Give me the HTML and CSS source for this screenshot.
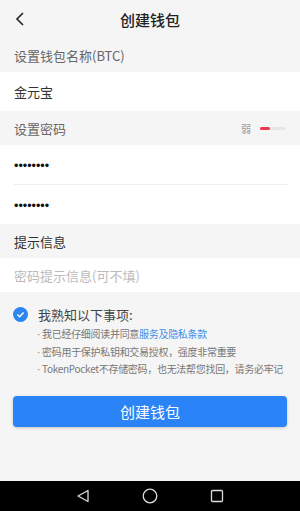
FILE: index.html
```html
<!DOCTYPE html>
<html lang="zh">
<head>
<meta charset="utf-8">
<link rel="stylesheet" href="styles.css">
</head>
<body>
<div class="screen">
  <header class="topbar">
    <svg class="back" width="10" height="14" viewBox="0 0 10 14"><path d="M8 1 L2 7 L8 13" fill="none" stroke="#222" stroke-width="1.6"/></svg>
    <h1 class="title">创建钱包</h1>
  </header>

  <div class="label">设置钱包名称(BTC)</div>
  <div class="group">
    <div class="row">金元宝</div>
  </div>

  <div class="label label-split">
    <span>设置密码</span>
    <span class="strength"><span class="weak">弱</span><span class="bar"><span class="fill"></span></span></span>
  </div>
  <div class="group">
    <div class="row dots divided">••••••••</div>
    <div class="row dots">••••••••</div>
  </div>

  <div class="label label-dark">提示信息</div>
  <div class="group">
    <div class="row placeholder">密码提示信息(可不填)</div>
  </div>

  <section class="notice">
    <div class="notice-head">
      <svg class="check" width="15" height="15" viewBox="0 0 15 15"><circle cx="7.5" cy="7.5" r="7.5" fill="#2b86f0"/><path d="M4.4 7.6 L6.6 9.7 L10.6 5.4" fill="none" stroke="#fff" stroke-width="1.4"/></svg>
      <span>我熟知以下事项:</span>
    </div>
    <ul class="points">
      <li><span class="mid">·</span>我已经仔细阅读并同意<span class="link">服务及隐私条款</span></li>
      <li><span class="mid">·</span>密码用于保护私钥和交易授权，强度非常重要</li>
      <li><span class="mid">·</span>TokenPocket不存储密码，也无法帮您找回，请务必牢记</li>
    </ul>
  </section>

  <div class="actions">
    <button class="primary">创建钱包</button>
  </div>

  <nav class="navbar">
    <svg width="14" height="14" viewBox="0 0 14 14"><path d="M12 1.5 L2 7 L12 12.5 Z" fill="none" stroke="#ddd" stroke-width="1.3" stroke-linejoin="round"/></svg>
    <svg width="16" height="16" viewBox="0 0 16 16"><circle cx="8" cy="8" r="6.8" fill="none" stroke="#ddd" stroke-width="1.3"/></svg>
    <svg width="14" height="14" viewBox="0 0 14 14"><rect x="1.5" y="1.5" width="11" height="11" rx="1" fill="none" stroke="#ddd" stroke-width="1.3"/></svg>
  </nav>
</div>
</body>
</html>
```

FILE: styles.css
```css
* { box-sizing: border-box; margin: 0; padding: 0; }
html, body { width: 300px; height: 511px; overflow: hidden; }
body {
  font-family: "Noto Sans CJK SC", "Noto Sans", sans-serif;
  background: #f5f5f5;
  color: #333;
}
.screen { width: 300px; height: 511px; display: flex; flex-direction: column; }

.topbar {
  height: 38px;
  display: flex;
  align-items: center;
  justify-content: center;
  position: relative;
}
.back { position: absolute; left: 15px; top: 12px; }
.title { font-size: 15px; font-weight: 500; color: #222; }

.label {
  height: 34px;
  padding: 0 14px;
  display: flex;
  align-items: center;
  font-size: 13px;
  color: #666;
}
.label-dark { color: #333; }
.label-split { justify-content: space-between; }
.strength { display: flex; align-items: center; gap: 9px; padding-right: 0; }
.weak { font-size: 10px; color: #999; }
.bar { width: 26px; height: 3px; background: #e6e6e6; border-radius: 2px; display: flex; }
.fill { width: 10px; height: 3px; background: #e8394a; border-radius: 2px; }

.group { background: #fff; }
.row {
  height: 39px;
  margin: 0 12px 0 14px;
  display: flex;
  align-items: center;
  font-size: 13px;
  color: #333;
}
.dots {
  height: 39.5px;
  padding-top: 4px;
  font-family: "Liberation Sans", Arial, sans-serif;
  font-size: 12.5px;
  color: #111;
}
.divided { border-bottom: 1px solid #ededed; }
.placeholder { height: 34px; color: #bbb; }

.notice { padding: 14px 0 0 13px; height: 88px; }
.notice-head { display: flex; align-items: center; gap: 10px; font-size: 13px; color: #444; height: 16px; }
.points { list-style: none; padding-left: 24px; margin-top: 4px; }
.points li { font-size: 10px; color: #777; line-height: 16.5px; white-space: nowrap; letter-spacing: -0.3px; }
.mid { font-family: "Liberation Sans", Arial, sans-serif; margin-right: 2px; }
.link { color: #3b8de8; }

.actions { padding: 16px 13px 0; flex: 1; }
.primary {
  width: 100%;
  height: 31px;
  border: none;
  border-radius: 4px;
  background: #2a84f7;
  color: #fff;
  font-family: inherit;
  font-size: 15px;
  box-shadow: 0 1px 3px rgba(0,0,0,0.2);
}

.navbar {
  height: 30px;
  background: #000;
  display: flex;
  align-items: center;
  justify-content: center;
  gap: 52px;
}
```
